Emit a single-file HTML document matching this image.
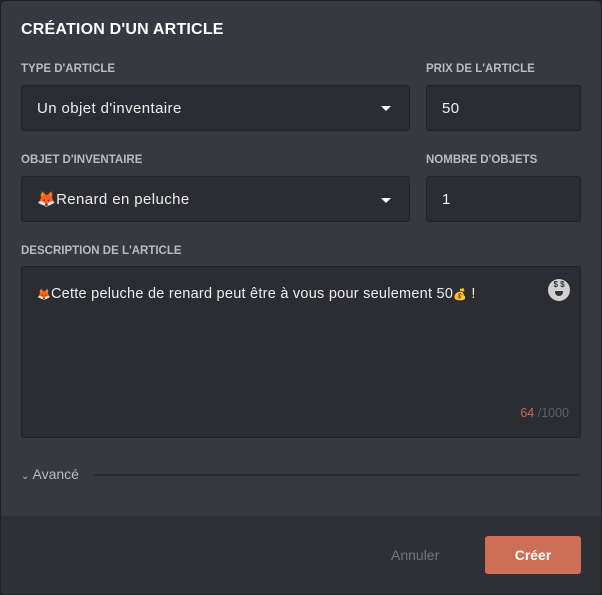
<!DOCTYPE html><html><head><meta charset="utf-8"><style>
body{margin:0;width:602px;height:595px;background:#202225;font-family:"Liberation Sans","Noto Sans CJK JP",sans-serif;overflow:hidden}
.m{position:absolute;left:1px;top:1px;width:600px;height:593px;background:#36393f;border-radius:4px;overflow:hidden}
.t{position:absolute;left:20px;top:20px;color:#fff;font-weight:bold;font-size:16px;letter-spacing:0.2px}
.l{position:absolute;color:#b9bbbe;font-weight:bold;font-size:11.5px}
.i{position:absolute;background:#2b2d32;border:1px solid #222327;border-radius:3px;box-sizing:border-box;color:#eee;font-size:15px;padding-left:15px;line-height:45px;letter-spacing:0.4px}
.car{position:absolute;right:18px;top:20px;width:0;height:0;border-left:5px solid transparent;border-right:5px solid transparent;border-top:5px solid #fff}
.f{position:absolute;left:0;top:515px;width:600px;height:78px;background:#2f3136}
</style></head><body><div class="m">
<div class="t">CRÉATION D'UN ARTICLE</div>
<div class="l" style="left:20px;top:62px">TYPE D'ARTICLE</div>
<div class="l" style="left:425px;top:62px">PRIX DE L'ARTICLE</div>
<div class="i" style="left:20px;top:84px;width:389px;height:46px">Un objet d'inventaire<div class="car"></div></div>
<div class="i" style="left:425px;top:84px;width:155px;height:46px">50</div>
<div class="l" style="left:20px;top:153px">OBJET D'INVENTAIRE</div>
<div class="l" style="left:425px;top:153px">NOMBRE D'OBJETS</div>
<div class="i" style="left:20px;top:175px;width:389px;height:46px"><span style="font-size:15px">🦊</span>Renard en peluche<div class="car" style="top:21px"></div></div>
<div class="i" style="left:425px;top:175px;width:155px;height:46px">1</div>
<div class="l" style="left:20px;top:244px">DESCRIPTION DE L'ARTICLE</div>
<div class="i" style="left:20px;top:265px;width:560px;height:172px;line-height:20px;padding-top:17px;font-size:14.5px;letter-spacing:0.25px"><span style="font-size:11px">🦊</span>Cette peluche de renard peut être à vous pour seulement 50<span style="font-size:11px">💰</span> !
<div style="position:absolute;right:10px;top:12px;width:22px;height:22px;border-radius:50%;background:#d0d0d0;color:#333;font-size:8px;text-align:center;line-height:12px;font-weight:bold;letter-spacing:0">$ $<div style="width:8px;height:5px;margin:0 auto;background:#333;border-radius:0 0 4px 4px"></div></div>
<div style="position:absolute;right:11px;bottom:14px;font-size:12.5px;color:#c86a52;letter-spacing:0">64 <span style="color:#5c5f66">/1000</span></div></div>
<div style="position:absolute;left:20px;top:465px;color:#b9bbbe;font-size:14px"><span style="font-size:10px">⌄</span> Avancé</div>
<div style="position:absolute;left:93px;top:473px;width:486px;height:2px;background:#2a2c30"></div>
<div class="f">
<div style="position:absolute;left:390px;top:31px;color:#72767d;font-size:14px">Annuler</div>
<div style="position:absolute;left:484px;top:20px;width:96px;height:38px;background:#cd6e57;border-radius:3px;color:#fff;font-size:14px;font-weight:bold;text-align:center;line-height:38px">Créer</div>
</div></div></body></html>
